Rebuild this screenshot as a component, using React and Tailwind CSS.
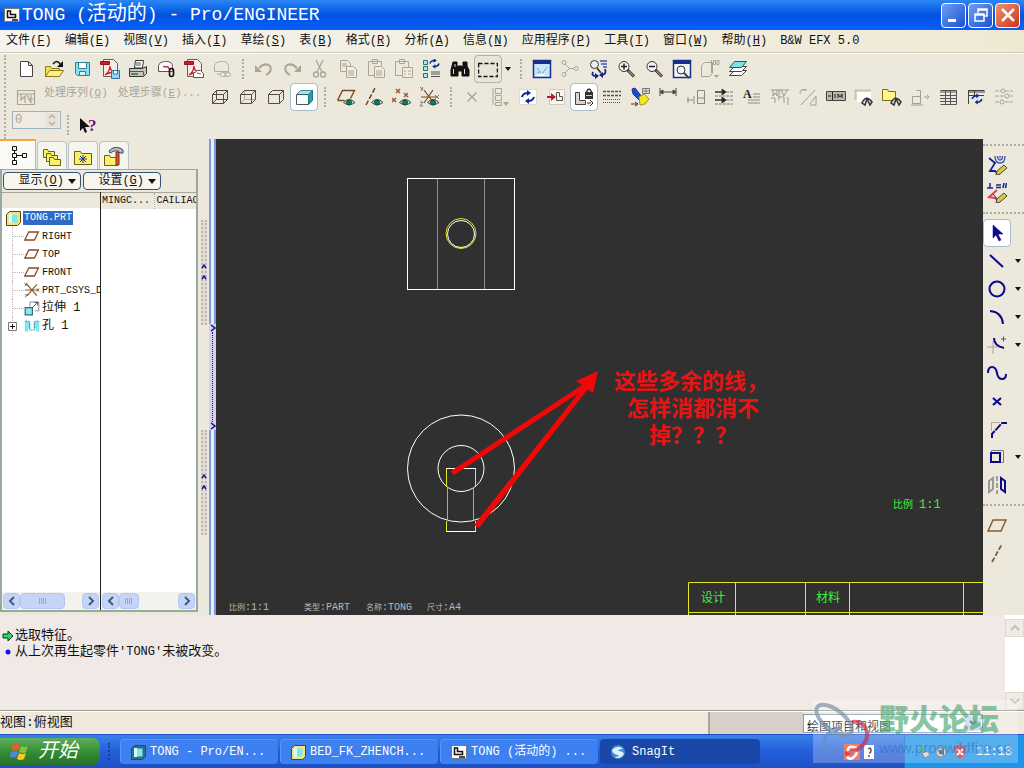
import React, { useState } from 'react';

const Icon = ({ children, size = 20 }) => (
  <svg width={size} height={size} viewBox="0 0 20 20" className="shrink-0" fill="none" stroke="#55524a" strokeWidth="1" aria-hidden="true">
    {children}
  </svg>
);

const glass = (
  <>
    <circle cx="8" cy="7.5" r="5" fill="#f4f4f4" stroke="#333" />
    <path d="M11.5 11 L18 17.5" stroke="#333" strokeWidth="3" />
    <path d="M12.5 12 L17.5 17" stroke="#b98a5c" strokeWidth="1.2" />
  </>
);
const pdf = (
  <>
    <path d="M3.5 .5h10l4 4v13h-14z" fill="#f3eeea" stroke="#6b5a58" />
    <path d="M.5 2.5h9v3h-9z" fill="#d01820" stroke="#a01018" />
    <path d="M5 16c4-3 5-7 5-9c0 4 3 6 6 6c-4 0-8 1-11 3z" stroke="#d02028" strokeWidth="1.3" />
  </>
);
const eye = (
  <>
    <path d="M7.5 15.5q5.500-6 11.500 0q-6 4.500-11.500 0z" fill="#bfe8da" stroke="#444" />
    <circle cx="13" cy="15.500" r="2.500" fill="#177a5c" stroke="#0d4a3a" />
  </>
);
const refresh = (
  <g stroke="#0a2a9c" strokeWidth="2">
    <path d="M4 10q1-4 6-4" /><path d="M9 3l4 3-4 3z" fill="#0a2a9c" stroke="none" />
    <path d="M16 10q-1 4-6 4" /><path d="M11 11l-4 3 4 3z" fill="#0a2a9c" stroke="none" />
  </g>
);

const icons = {
  newFile: <path d="M4.500 2.500h8l4 4v11h-12z M12.500 2.500v4h4" fill="#fff" stroke="#444" />,
  open: (
    <>
      <path d="M1.500 17.500v-10h5l1 2h8v8z" fill="#f5e04a" stroke="#8a7a20" />
      <path d="M1.500 17.500l4-6h14l-4 6z" fill="#fff27a" stroke="#8a7a20" />
      <path d="M9 5q4-5 7 0" stroke="#111" strokeWidth="1.500" /><path d="M19 2v6h-6z" fill="#111" stroke="none" />
    </>
  ),
  save: (
    <>
      <path d="M3.500 3.500h14v13h-12l-2-2z" fill="#8fe0ee" stroke="#2a7f98" />
      <path d="M6.500 3.500h8v6h-8z" fill="#fff" stroke="#2a7f98" /><path d="M7.500 12.500h6v4h-6z" fill="#d8f6fa" stroke="#2a7f98" />
    </>
  ),
  pdfSave: <>{pdf}<path d="M11.500 11.500h8v8h-8z" fill="#8fd8ee" stroke="#3b6ea0" /><path d="M13.500 12v3h4v-3" fill="#fff" stroke="#3b6ea0" /></>,
  print: (
    <>
      <path d="M6.500 9l1-7.500h8l-1 7.500z" fill="#fff" stroke="#333" />
      <path d="M1.500 9.500h13l4-2v7l-3 3h-14z" fill="#c9c6b8" stroke="#333" />
      <path d="M8 4h5M8 6h5M1.500 12.500h14v4" stroke="#555" /><path d="M3 15h7" stroke="#1c7a34" strokeWidth="1.500" />
    </>
  ),
  mail: (
    <>
      <path d="M2.500 12.500v-6q1-4 6-4h2q6 0 6 5v5z" fill="#fbfbfb" stroke="#555" />
      <path d="M7 7.500l5 .500 2 3" stroke="#d03048" strokeWidth="1.500" />
      <rect x="13.500" y="9.500" width="4" height="8" rx="2" stroke="#111" strokeWidth="1.600" />
    </>
  ),
  pdfMail: <>{pdf}<path d="M9.500 18.500v-4l4-3h3l3 3v4z" fill="#fff" stroke="#555" /><path d="M13 14l4 1" stroke="#d03048" /></>,
  mailOff: (
    <g stroke="#b3ae9e">
      <path d="M2.500 12.500v-6q1-4 6-4h2q6 0 6 5v5z" /><path d="M5 15h4" />
      <rect x="8.500" y="13.500" width="6" height="4" rx="2" /><rect x="12.500" y="13.500" width="6" height="4" rx="2" />
    </g>
  ),
  undo: <g stroke="#aaa593" strokeWidth="2"><path d="M5 9q6-6 11-2q3 5-4 9" /><path d="M1 6v7h7z" fill="#aaa593" stroke="none" /></g>,
  redo: <g stroke="#aaa593" strokeWidth="2"><path d="M15 9q-6-6-11-2q-3 5 4 9" /><path d="M19 6v7h-7z" fill="#aaa593" stroke="none" /></g>,
  cut: <g stroke="#aaa593" strokeWidth="1.300"><path d="M6 1l6 12M13 1L7 13" /><circle cx="6" cy="15.500" r="2.500" /><circle cx="13" cy="15.500" r="2.500" /></g>,
  copy: <g stroke="#aaa593"><path d="M2.500 1.500h7l3 3v8h-10z" /><path d="M8.500 7.500h7l3 3v8h-10z" fill="#f0ece0" /><path d="M4 5h5M4 7h5M10 12h6M10 14h6M10 16h6" /></g>,
  paste: <g stroke="#aaa593"><path d="M2.500 2.500h13v14h-13z M6.500 .500h5v4h-5z" /><path d="M8.500 7.500h7l3 3v8h-10z" fill="#f0ece0" /><path d="M10 12h6M10 14h6M10 16h6" /></g>,
  pasteSpecial: <g stroke="#aaa593"><path d="M1.500 2.500h13v14h-13z M5.500 .500h5v4h-5z" /><path d="M8.500 8.500h10v10h-10z" fill="#f0ece0" /><path d="M10 12h2M14 12h3M10 15h2M14 15h3" /></g>,
  regen: (
    <>
      <path d="M1.500 1.500h4v4h-4zM1.500 7.500h4v4h-4zM1.500 14.500h4v4h-4z" fill="#a8ecec" stroke="#2d6d6d" />
      <path d="M9 13h9M9 15h9M9 17.500h9" stroke="#555" />
      <g transform="translate(5 -3) scale(.75)">{refresh}</g>
    </>
  ),
  find: (
    <g fill="#111" stroke="#111">
      <path d="M3 3h4v4l1 2v8H1v-6z M13 3h4v4l2 4v6h-7v-8l1-2z M8 7h4v5H8z" />
      <path d="M3.500 10v5M14.500 10v5M5 5v3" stroke="#ddd" />
    </g>
  ),
  selectBox: <path d="M.500 4.500h19v13h-19z" stroke="#111" strokeWidth="1.500" strokeDasharray="4 2" />,
  repaint: (
    <>
      <path d="M1.500 1.500h17v17h-17z" fill="#c9e6fa" stroke="#16308c" strokeWidth="1.500" /><path d="M1 1h18v4H1z" fill="#16308c" stroke="none" />
      <path d="M5 9l5 6 5-7M10 15l-5-2" stroke="#5a84c4" strokeDasharray="2 1" /><path d="M4 17l6-3 3 3z" fill="#fff" stroke="none" />
    </>
  ),
  nodes: <g stroke="#aaa593"><circle cx="4" cy="3.500" r="2" /><circle cx="4" cy="15.500" r="2" /><path d="M5 5l4 4M5 14l4-4M9 9.500h5" /><circle cx="16" cy="9.500" r="2" /></g>,
  zoomRefresh: (
    <>
      <circle cx="6.500" cy="5.500" r="4" fill="#eee" stroke="#333" /><path d="M9 9l4 5" stroke="#444" strokeWidth="2" />
      <path d="M12 2h7M13 5h6M15 8h4" stroke="#4055b0" strokeWidth="1.500" />
      <path d="M5 13q-2 4 3 4M17 10q2 5-3 6" stroke="#16208c" strokeWidth="1.800" /><path d="M7 14l4 3-4 3zM15 13v6l-4-3z" fill="#16208c" stroke="none" />
    </>
  ),
  zoomIn: <>{glass}<path d="M5 7.500h6M8 4.500v6" stroke="#222" strokeWidth="1.500" /></>,
  zoomOut: <>{glass}<path d="M5 7.500h6" stroke="#222" strokeWidth="1.500" /></>,
  refit: (
    <>
      <path d="M1.500 1.500h17v17h-17z" fill="#f4f4f4" stroke="#16308c" strokeWidth="1.500" /><path d="M1 1h18v4H1z" fill="#16308c" stroke="none" />
      <circle cx="9" cy="11" r="4" stroke="#333" /><path d="M12 14l5 5" stroke="#444" strokeWidth="2" />
    </>
  ),
  orient: <g stroke="#aaa593"><path d="M1.500 6.500l3-3h8v11l-3 3h-8z" /><path d="M11.500 1v13M13.500 1.500h2v4h-2zM17 1.500h2v4h-2z" /><path d="M14 16h5l-2.500 3z" fill="#aaa593" stroke="none" /></g>,
  layers: (
    <>
      <path d="M1.500 16.500l5-5h12l-5 5z" fill="#fff" stroke="#444" /><path d="M1.500 12.500l5-5h12l-5 5z" fill="#fff" stroke="#444" />
      <path d="M1.500 8.500l5-6h12l-5 6z" fill="#7de3ea" stroke="#285d66" />
    </>
  ),
  process: <g stroke="#aaa593" strokeWidth="1.200"><path d="M1.500 3.500h17v14h-17zM1 7h18M5 7v6l4-4v7M11 8l4 8V8M12 12h5" /></g>,
  wire: <path d="M2.500 7.500h11v9h-11zM6.500 3.500h11v9h-11zM2.500 7.500l4-4M13.500 7.500l4-4M2.500 16.500l4-4M13.500 16.500l4-4" stroke="#554a40" />,
  hidden: <><path d="M6.500 3.500v9h11M2.500 16.500l4-4" stroke="#b0a8a0" /><path d="M2.500 7.500h11v9h-11zM2.500 7.500l4-4h11v9l-4 4M13.500 7.500l4-4" stroke="#554a40" /></>,
  noHidden: <path d="M2.500 7.500h11v9h-11zM2.500 7.500l4-4h11v9l-4 4M13.500 7.500l4-4" stroke="#554a40" />,
  shaded: (
    <>
      <path d="M2.500 7.500l4-4h12l-4 4z" fill="#8ceaf0" stroke="#3f8f98" /><path d="M2.500 7.500h12v10h-12z" fill="#f2fdfd" stroke="#555" />
      <path d="M14.500 7.500l4-4v10l-4 4z" fill="#1fa0ae" stroke="#28717a" />
    </>
  ),
  planeEye: <><path d="M1.500 13.500l5-10h12l-4 8M1.500 13.500h7" stroke="#7a4a20" strokeWidth="1.400" />{eye}</>,
  axisEye: <><path d="M2 18l9-17" stroke="#7a4a20" strokeWidth="1.600" strokeDasharray="5 2" />{eye}</>,
  pointEye: <><path d="M4 2l4 4M8 2l-4 4M0 11l4 4M4 11l-4 4M12 6l4 4M16 6l-4 4" stroke="#a0522d" strokeWidth="1.400" />{eye}</>,
  csysEye: <><path d="M4 3l9 12M13 3L4 16M1 10h15" stroke="#7a4a20" strokeWidth="1.200" /><path d="M0 0l3 3M3 0L1 4M15 8l4 4M19 8l-4 4M0 15h3l-3 4h3" stroke="#777" />{eye}</>,
  close: <path d="M5.500 5.500l9 9M14.500 5.500l-9 9" stroke="#a29d8d" strokeWidth="1.200" />,
  listOff: <g stroke="#aaa593"><path d="M5.500 1.500h6v5h-6zM5.500 8.500h6v5h-6zM5.500 15.500h6v3h-6zM3 1v17" /><path d="M13 15h6l-3 4z" fill="#aaa593" stroke="none" /></g>,
  update: <><path d="M1.500 2.500h17v15h-17z" fill="#fff" stroke="#e0dccd" />{refresh}</>,
  insertView: <><path d="M3.500 2.500h15v15h-15z" fill="#f8f5ee" stroke="#d0cbbb" /><path d="M10.500 5.500v8h6v-4h-3v-4z" stroke="#555" /><path d="M1 10h6" stroke="#c01828" strokeWidth="2" /><path d="M5 6l5 4-5 4z" fill="#c01828" stroke="none" /></>,
  lockView: (
    <>
      <path d="M1.500 5.500h4v8h6v4h-10z" fill="#d8d6cf" stroke="#444" /><rect x="11" y="5" width="8" height="7" fill="#333" stroke="none" />
      <path d="M12.500 5q2.500-6 5 0" stroke="#333" strokeWidth="1.500" /><path d="M12 8.500h6" stroke="#ccc" /><path d="M13 16h4M16 13l3 3-3 3" stroke="#222" />
    </>
  ),
  hatch: <g stroke="#555"><path d="M1 4.500h18M1 8.500h18" strokeDasharray="3 1" strokeWidth="1.500" /><path d="M1 12.500h18M1 15.500h18" strokeDasharray="1 1" /></g>,
  clean: (
    <>
      <path d="M2 2l3-1 7 9-3 3-6-6z" fill="#1c4fc0" stroke="#1437a0" /><path d="M9 10l5-3 5 5-4 5-5 1z" fill="#f5e52a" stroke="#a59510" />
      <path d="M12.500 1.500h7v5h-7zM12 4h7M16 1v5" stroke="#777" /><path d="M1 17h6M5 15l3 2-3 2" stroke="#333" />
    </>
  ),
  dimension: <path d="M2 1v8M18 1v8M2 5h16M2 5l3-2v4zM18 5l-3-2v4z" fill="#444" stroke="#444" />,
  ref: <g stroke="#8d897c"><path d="M1 13h6M8 9v8M2 10v6M11.500 3.500h7v13h-7zM12 11h6" /></g>,
  align: <g stroke="#333"><path d="M1 5h9M1 13h9" strokeWidth="1.500" /><path d="M8 2l4 3-4 3zM8 10l4 3-4 3z" fill="#222" /><path d="M12 5h8M12 9h8M12 13h8M1 9h10M1 17h18" stroke="#777" strokeDasharray="3 1" /></g>,
  note: <><text x="1" y="11" fontSize="12" fontWeight="bold" fill="#222" stroke="none" fontFamily="Liberation Serif">A</text><path d="M11 7h7M11 10h7M6 13h12M6 16h12" stroke="#888" /></>,
  gtol: <g stroke="#9d998a"><path d="M1 3h18M3 3v6l2-3 2 3V3M9 3v10M11 3l3 6 3-6M8 10h6v6M18 10v8M1 11h4v5" /></g>,
  surface: <g stroke="#a29e90"><path d="M3 18L17 3M8 3q-6-2-6 4M4 3h5M12 17l6-8M18 9v9h-6" /></g>,
  tolerance: <><path d="M.500 4.500h19v9h-19z" fill="#b9b7ae" stroke="#444" /><path d="M6.500 5v8M2 9h3M9 11V7M12 11V7l2 3 2-3v4" stroke="#222" /></>,
  symbol: <><path d="M1.500 13V3.500h15" stroke="#c8c4b6" strokeWidth="2" /><path d="M3 5h14v10H3z" fill="#fff" stroke="none" /><path d="M8 16q4-9 10-1l-2 3-3-6-2 6z" fill="#ddd" stroke="#333" strokeWidth="1.500" /></>,
  symbolFolder: <><path d="M.500 13.500v-11h5l1 2h7v9z" fill="#fff58a" stroke="#7a7010" /><path d="M9 16q4-9 10-1l-2 3-3-6-2 6z" fill="#ddd" stroke="#333" strokeWidth="1.500" /></>,
  move: <g stroke="#a29e90"><path d="M2.500 9.500h8v7h-8zM6.500 3.500h4v9M14 10h5M17 8l2 2-2 2M1 18h12" /></g>,
  table: <path d="M2.500 3.500h16v14h-16M2 5h16M2 8.500h16M2 11.500h16M2 14.500h16M7.500 4v14M12.500 4v14" stroke="#555" />,
  tableUpdate: <><path d="M2.500 3.500h16M2 5h17M2 8.500h16M2.500 3v14M8.500 4v6" stroke="#444" /><g transform="translate(3 4) scale(.8)">{refresh}</g></>,
  tune: <g stroke="#a8a494"><path d="M1 4h18M1 9h18M1 15h18" strokeDasharray="4 1" /><circle cx="9" cy="4" r="2" fill="#eee" /><circle cx="13" cy="9" r="2" fill="#eee" /><circle cx="8" cy="15" r="2" fill="#eee" /></g>,
  sketchRef: (
    <>
      <path d="M2 3l6 5-5 8h5l4 4" stroke="#16209a" strokeWidth="1.800" />
      <path d="M8 1q0 7 5 7t5-7M10.500 1q0 4 2.500 4t2.500-4" stroke="#3a4cae" strokeWidth="1.300" /><circle cx="13" cy="2" r="1" fill="#3a4cae" stroke="none" />
      <path d="M10 16l7-6 3 3-7 6-4 1z" fill="#d8cf40" stroke="#444" />
    </>
  ),
  constraint: (
    <>
      <path d="M0 5h6M3 0v5M9 2h5M9 4.500h5M17 0l-1 5M19.500 0l-1 5" stroke="#16209a" strokeWidth="1.500" />
      <path d="M1 15l9-8M1 14l7 1 4 4" stroke="#e04848" strokeWidth="2" /><path d="M6 11l6 7" stroke="#16209a" /><path d="M10 16l7-6 3 3-7 6-4 1z" fill="#d8cf40" stroke="#444" />
    </>
  ),
  pointer: <path d="M6 2v13l3-3 3 6 2-1-3-6h5z" fill="#0a0a8c" stroke="#0a0a8c" strokeWidth=".500" />,
  line: <path d="M3 4l13 12" stroke="#0a0a8c" strokeWidth="2" />,
  circle: <circle cx="10" cy="10" r="7.500" stroke="#0a0a8c" strokeWidth="2" />,
  arc: <path d="M3 4q12 1 13 13" stroke="#0a0a8c" strokeWidth="2" />,
  fillet: <><path d="M0 12h16M6 6v13" stroke="#aaa593" /><path d="M7 3q0 8 10 10" stroke="#0a0a8c" strokeWidth="2" /><path d="M14 4h5M16.500 1.500v5" stroke="#555" /></>,
  spline: <path d="M1 10q0-6 4-6t5 6t5 6t4-5" stroke="#0a0a8c" strokeWidth="2" />,
  point: <path d="M6 7l8 7M14 7l-8 7" stroke="#0a0a8c" strokeWidth="2.200" />,
  chamfer: <><path d="M4.500 12V3.500h8" stroke="#b4a88a" /><path d="M5 19v-4L15 4h5" stroke="#0a0a8c" strokeWidth="2" strokeDasharray="8 1" /></>,
  offset: <><path d="M4.500 6.500v-3h12v12h-2" stroke="#777" /><path d="M4 6h9v9H4z" stroke="#0a0a8c" strokeWidth="2" /></>,
  mirror: <><path d="M2 6l4-3v11l-4 3z" stroke="#999" strokeWidth="2" /><path d="M10 1v18" stroke="#555" strokeDasharray="5 2" /><path d="M14 3l4 3v11l-4-3z" stroke="#0a0a8c" strokeWidth="2" /></>,
  plane: <path d="M1 16l5-11h13l-5 11z" stroke="#8a5a28" strokeWidth="1.500" />,
  axis: <path d="M5 19L15 1" stroke="#8a5a28" strokeWidth="1.800" strokeDasharray="5 2" />,
};

const fileTools = ['newFile', 'open', 'save', 'pdfSave', 'print', 'mail', 'pdfMail', 'mailOff'];
const editTools = ['undo', 'redo', 'cut', 'copy', 'paste', 'pasteSpecial', 'regen', 'find'];
const viewTools = ['repaint', 'nodes', 'zoomRefresh', 'zoomIn', 'zoomOut', 'refit', 'orient', 'layers'];
const displayTools = ['wire', 'hidden', 'noHidden', 'shaded'];
const datumTools = ['planeEye', 'axisEye', 'pointEye', 'csysEye'];
const drawingTools = [
  'close', 'listOff', 'update', 'insertView', 'lockView', 'hatch', 'clean', 'dimension', 'ref', 'align',
  'note', 'gtol', 'surface', 'tolerance', 'symbol', 'symbolFolder', 'move', 'table', 'tableUpdate', 'tune',
];
const sketchTools = ['pointer', 'line', 'circle', 'arc', 'fillet', 'spline', 'point', 'chamfer', 'offset', 'mirror'];
const withMenu = ['line', 'circle', 'arc', 'fillet', 'offset'];

const ToolButton = ({ name, active, framed }) => (
  <button
    type="button"
    aria-label={name}
    className={
      active
        ? 'flex size-7 shrink-0 items-center justify-center rounded-sm border border-[#a9bccb] bg-white'
        : framed
          ? 'flex size-7 shrink-0 items-center justify-center rounded-sm border border-[#b5b1a5] bg-[#e8e4d8]'
          : 'flex size-7 shrink-0 items-center justify-center'
    }
  >
    <Icon>{icons[name]}</Icon>
  </button>
);

const Tools = ({ names, active }) => names.map(n => <ToolButton key={n} name={n} active={n === active} />);

const Grip = () => <div className="mx-1 w-1 shrink-0 self-stretch border-l-2 border-dotted border-[#b3af9f]" />;

const VSep = () => <div className="flex w-3.5 shrink-0 justify-center self-stretch py-1"><div className="border-l-2 border-dotted border-[#b3af9f]" /></div>;

const Caret = () => (
  <svg width="6" height="4" viewBox="0 0 6 4" aria-hidden="true"><path d="M0 0h6L3 4z" fill="#111" /></svg>
);

const menus = [
  ['文件', 'F'], ['编辑', 'E'], ['视图', 'V'], ['插入', 'I'], ['草绘', 'S'], ['表', 'B'], ['格式', 'R'],
  ['分析', 'A'], ['信息', 'N'], ['应用程序', 'P'], ['工具', 'T'], ['窗口', 'W'], ['帮助', 'H'],
];

const DrawingIcon = () => (
  <svg width="16" height="14" viewBox="0 0 16 14" className="shrink-0" aria-hidden="true">
    <path d="M.500 .500h15v13H.500z" fill="#fff" stroke="#777" />
    <path d="M3.500 3v6.500h8v-3h-5V3zM8 12h6" fill="none" stroke="#111" strokeWidth="1.500" />
  </svg>
);

const PartIcon = ({ yellow }) => (
  <svg width="15" height="15" viewBox="0 0 15 15" className="shrink-0" aria-hidden="true">
    <path d="M.500 3.500l3-3h11v11l-3 3H.500z" fill={yellow ? '#f4e37a' : '#2c6f86'} stroke="#4a4620" />
    <path d="M3.500 3.500h8v8h-8z" fill="#7ce6ee" /><path d="M3 3h3v9H3z" fill="#d9fbfb" />
  </svg>
);

const TitleBar = () => (
  <header className="flex h-[30px] items-center bg-gradient-to-b from-[#2a86f5] via-[#0351e0] to-[#0560fa] pl-1 pr-1">
    <DrawingIcon />
    <h1 className="ml-0.5 flex-1 truncate text-lg leading-7 text-white">
      TONG (<span className="text-xl">活动的</span>) - Pro/ENGINEER
    </h1>
    <div className="flex gap-0.5">
      <button type="button" aria-label="最小化" className="flex size-[25px] items-center justify-center rounded border border-white bg-gradient-to-br from-[#6f9df5] to-[#1c50d0]">
        <svg width="18" height="18" viewBox="0 0 18 18"><path d="M3 13h8v3H3z" fill="#fff" /></svg>
      </button>
      <button type="button" aria-label="还原" className="flex size-[25px] items-center justify-center rounded border border-white bg-gradient-to-br from-[#6f9df5] to-[#1c50d0]">
        <svg width="18" height="18" viewBox="0 0 18 18" fill="none" stroke="#fff" strokeWidth="1.500"><path d="M6 7V3h9v7h-3M6 4h9M3 8h9v7H3zM3 9h9" /></svg>
      </button>
      <button type="button" aria-label="关闭" className="flex size-[25px] items-center justify-center rounded border border-white bg-gradient-to-br from-[#f0906c] to-[#c83010]">
        <svg width="18" height="18" viewBox="0 0 18 18" stroke="#fff" strokeWidth="2.500"><path d="M3 3l12 12M15 3L3 15" /></svg>
      </button>
    </div>
  </header>
);

const MenuBar = () => (
  <nav className="flex h-[23px] items-center gap-[13px] overflow-hidden border-b border-[#d0ccbe] bg-gradient-to-r from-[#f4f3ee] to-[#efe9d4] pl-[6px] text-xs">
    {menus.map(([label, key]) => (
      <button type="button" key={key} className="shrink-0 whitespace-nowrap">{label}(<u>{key}</u>)</button>
    ))}
    <button type="button" className="shrink-0 whitespace-nowrap">B&amp;W EFX 5.0</button>
  </nav>
);

const Toolbars = () => {
  const [count, setCount] = useState('0');
  return (
    <div className="flex h-[86px] overflow-hidden border-t border-[#fbfaf5] pt-px">
      <Grip />
      <div className="flex min-w-0 flex-1 flex-col">
        <div className="flex h-7 items-center">
          <Tools names={fileTools} />
          <VSep />
          <Tools names={editTools} />
          <ToolButton name="selectBox" framed />
          <button type="button" aria-label="选取菜单" className="flex h-7 w-3 shrink-0 items-center justify-center"><Caret /></button>
          <VSep />
          <Tools names={viewTools} />
        </div>
        <div className="flex h-7 items-center">
          <ToolButton name="process" />
          <div className="flex w-[166px] shrink-0 gap-2.5 self-start whitespace-nowrap pl-1 pt-0.5 text-[11px] leading-4 text-[#aaa593]">
            <button type="button" disabled>处理序列(<u>Q</u>)</button>
            <button type="button" disabled>处理步骤(<u>E</u>)...</button>
          </div>
          <Tools names={displayTools} active="shaded" />
          <VSep />
          <Tools names={datumTools} />
          <VSep />
          <Tools names={drawingTools} active="lockView" />
        </div>
        <div className="flex h-7 items-start">
          <div className="flex h-[18px] w-[49px] items-center border border-[#9fb3c4] bg-[#efeae2]">
            <input aria-label="帧" value={count} onChange={e => setCount(e.target.value)} className="w-8 bg-transparent pl-0.5 text-xs leading-4 text-[#aaa593] outline-none" />
            <svg width="14" height="14" viewBox="0 0 14 14" aria-hidden="true">
              <path d="M0 0h14v14H0z" fill="#e6e2d6" /><path d="M4 5l3-3 3 3M4 9l3 3 3-3" fill="none" stroke="#b5b1a3" strokeWidth="1.500" />
            </svg>
          </div>
          <VSep />
          <button type="button" aria-label="上下文帮助" className="flex h-6 w-7 items-end justify-center">
            <svg width="20" height="18" viewBox="0 0 20 18">
              <path d="M1 1v13l3-3 2 5 2-1-2-5h5z" fill="#111" />
              <text x="9" y="14" fontSize="17" fontWeight="bold" fill="#7a1080" fontFamily="Liberation Serif">?</text>
            </svg>
          </button>
        </div>
      </div>
    </div>
  );
};

const folder = (x, y) => <path d={`M${x} ${y}v-8h4l1 2h6v6z`} fill="#fbf06a" stroke="#6b6310" />;

const tabs = [
  { id: '模型树', art: <path d="M4.500 1.500h4v4h-4zM4.500 8.500h4v4h-4zM4.500 15.500h4v4h-4zM14.500 8.500h4v4h-4zM6.500 6v2M6.500 13v2M9 10.500h5" stroke="#111" /> },
  { id: '文件夹', art: <>{folder(1.5, 11.5)}{folder(4.5, 15.5)}{folder(7.5, 19.5)}</> },
  { id: '收藏夹', art: <><path d="M1.500 18.500v-13h6l1 2h10v11z" fill="#fbf06a" stroke="#6b6310" /><path d="M10 9v8M6 13h8M7 10l6 6M13 10l-6 6" stroke="#1c35a8" /></> },
  { id: '连接', art: <><path d="M.500 19.500v-10h5l1 2h7v8z" fill="#fbf06a" stroke="#6b6310" /><path d="M12 6h3v13h-3z" fill="#d05828" stroke="#803010" /><path d="M5 5q4-5 11-3l3 2v3h-3l-2-2q-4-1-8 2z" fill="#aebcc8" stroke="#445" /></> },
];

const planeArt = <path d="M1 15l5-10h12l-5 10z" stroke="#8a4a20" strokeWidth="1.600" />;
const treeRows = [
  ['RIGHT', planeArt],
  ['TOP', planeArt],
  ['FRONT', planeArt],
  ['PRT_CSYS_DEF', <><path d="M3 2l13 15M16 3L4 17M1 10h17" stroke="#8a5a20" strokeWidth="1.500" /><path d="M0 1l4 4M4 1L1 5M16 8l3 4M19 8l-3 4M1 16h4l-4 3" stroke="#555" /></>],
  ['拉伸 1', <><path d="M7.500 8.500v-6h11v11h-5" stroke="#777" /><path d="M1.500 9.500h9v9h-9z" fill="#8ce8f0" stroke="#28707c" strokeWidth="1.500" /><path d="M10 10l7-7M13 3h4v4" stroke="#335" /></>],
  ['孔 1', <><path d="M1 4h4v13H1zM15 4h4v13h-4zM5 4h3v9H5zM12 4h3v9h-3z" fill="#7fe6ee" stroke="none" /><path d="M1 4h5l1 2v9h6V6l1-2h5" stroke="#2a8490" strokeDasharray="3 1" /></>],
];

const ScrollButton = ({ dir }) => (
  <button type="button" aria-label={dir === 'left' ? '向左' : '向右'} className="flex h-4 w-[17px] shrink-0 items-center justify-center rounded-sm border border-[#b5c6f2] bg-[#c6d4fa]">
    <svg width="8" height="10" viewBox="0 0 8 10" fill="none" stroke="#45587c" strokeWidth="2"><path d={dir === 'left' ? 'M6 1L2 5l4 4' : 'M2 1l4 4-4 4'} /></svg>
  </button>
);

const Thumb = () => (
  <svg width="8" height="6" viewBox="0 0 8 6" stroke="#90a6dc"><path d="M.500 0v6M2.500 0v6M4.500 0v6M6.500 0v6" /></svg>
);

const ModelTree = () => (
  <aside className="flex w-[198px] shrink-0 flex-col pb-[3px]">
    <div className="flex h-[30px] shrink-0 items-end">
      {tabs.map((t, i) => (
        <button
          type="button"
          key={t.id}
          aria-label={t.id}
          className={
            i === 0
              ? 'flex h-[30px] w-9 items-center justify-center border-r border-t-2 border-r-[#b9b6a8] border-t-[#f0a838] bg-[#fbfaf7]'
              : 'ml-px flex h-[28px] w-[30px] items-center justify-center rounded-t-sm border border-b-0 border-[#b9c4c8] bg-[#f6f4ee]'
          }
        >
          <Icon>{t.art}</Icon>
        </button>
      ))}
    </div>
    <div className="flex min-h-0 flex-1 flex-col border-2 border-t border-[#9aa8a4] bg-[#ece9dc]">
      <div className="flex gap-0.5 p-px pt-0.5">
        {[['显示', 'O'], ['设置', 'G']].map(([label, key]) => (
          <button type="button" key={key} className="flex h-[18px] w-[78px] items-center justify-end gap-1 rounded-sm border border-[#2f5573] bg-[#f7f5ee] pr-1 text-xs leading-4">
            <span className="whitespace-nowrap">{label}(<u>{key}</u>)</span>
            <svg width="8" height="5" viewBox="0 0 8 5"><path d="M0 0h8L4 5z" fill="#111" /></svg>
          </button>
        ))}
      </div>
      <div className="mt-px flex min-h-0 flex-1 bg-white">
        <div className="flex w-[99px] shrink-0 flex-col border-r border-[#222]">
          <div className="h-4 shrink-0 border-t border-[#a8a698] bg-[#ece9dc]" />
          <div className="min-h-0 flex-1 overflow-hidden pl-1 pt-px text-[10px]">
            <div className="flex h-[18px] items-center gap-0.5">
              <PartIcon yellow />
              <span className="bg-[#316ac5] px-px leading-[14px] text-white">TONG.PRT</span>
            </div>
            <ul className="ml-1.5">
              {treeRows.map(([name, art], i) => (
                <li key={name} className="flex h-[18px] items-center whitespace-nowrap">
                  <span className="flex h-[18px] w-3 shrink-0 items-center border-l border-dotted border-[#bbb]">
                    {i === 5 ? (
                      <svg width="9" height="9" viewBox="0 0 9 9" className="relative -left-[5px]"><path d="M.500 .500h8v8h-8z" fill="#fff" stroke="#777" /><path d="M2 4.500h5M4.500 2v5" stroke="#111" /></svg>
                    ) : (
                      <span className="w-full border-t border-dotted border-[#bbb]" />
                    )}
                  </span>
                  <Icon size={16}>{art}</Icon>
                  <span className={i > 3 ? 'ml-0.5 text-xs leading-4' : 'ml-0.5'}>{name}</span>
                </li>
              ))}
            </ul>
          </div>
          <div className="flex h-[18px] shrink-0 items-center bg-[#f3f3ee] px-px">
            <ScrollButton dir="left" />
            <div className="flex h-4 w-[45px] items-center justify-center rounded-sm border border-[#b5c6f2] bg-[#c6d4fa]"><Thumb /></div>
            <div className="flex-1" />
            <ScrollButton dir="right" />
          </div>
        </div>
        <div className="flex min-w-0 flex-1 flex-col">
          <div className="min-h-0 flex-1 overflow-hidden">
            <table className="w-full table-fixed border-collapse">
              <thead>
                <tr className="h-4 border-t border-[#a8a698] bg-[#ece9dc] text-left text-[10px] leading-[14px]">
                  <th className="w-[53px] whitespace-nowrap border-r border-dotted border-[#aaa] p-0 pl-px font-normal">MINGC...</th>
                  <th className="overflow-hidden whitespace-nowrap p-0 pl-0.5 font-normal">CAILIAO</th>
                </tr>
              </thead>
            </table>
          </div>
          <div className="flex h-[18px] shrink-0 items-center bg-[#f3f3ee] px-px">
            <ScrollButton dir="left" />
            <div className="flex h-4 w-5 items-center justify-center rounded-sm border border-[#b5c6f2] bg-[#c6d4fa]"><Thumb /></div>
            <div className="flex-1" />
            <ScrollButton dir="right" />
          </div>
        </div>
      </div>
    </div>
  </aside>
);

const Chevrons = () => (
  <svg width="6" height="18" viewBox="0 0 6 18" fill="none" stroke="#14149a" strokeWidth="1.500"><path d="M1 5l2-3 2 3M1 16l2-3 2 3" /></svg>
);

const Splitter = () => (
  <div className="flex w-[18px] shrink-0">
    <div className="flex w-[11px] flex-col items-center justify-center gap-[105px]">
      {[0, 1].map(k => (
        <button type="button" key={k} aria-label="收起面板" className="flex h-[105px] w-1.5 items-center border-x-2 border-dotted border-[#bdb5b0] bg-[#e2dcd4]">
          <span className="-mx-0.5 shrink-0"><Chevrons /></span>
        </button>
      ))}
    </div>
    <div className="flex w-[7px] flex-col border-x-2 border-[#7e9bd6] bg-[#e4edfa]">
      <div className="flex-1" />
      <button type="button" aria-label="展开面板" className="-mx-0.5 flex h-[106px] flex-col items-center justify-between bg-[#d5d0ee]">
        <svg width="6" height="8" viewBox="0 0 6 8" fill="none" stroke="#14149a" strokeWidth="1.500"><path d="M1 1l4 3-4 3" /></svg>
        <span className="flex-1 border-l border-dotted border-[#14149a]" />
        <svg width="6" height="8" viewBox="0 0 6 8" fill="none" stroke="#14149a" strokeWidth="1.500"><path d="M1 1l4 3-4 3" /></svg>
      </button>
      <div className="flex-1" />
    </div>
  </div>
);

const footer = [
  [13, '比例', ':1:1'],
  [88, '类型', ':PART'],
  [150, '名称', ':TONG'],
  [211, '尺寸', ':A4'],
];

const Canvas = () => (
  <main className="min-w-0 flex-1 bg-[#303030]">
    <svg viewBox="0 0 767 476" className="block size-full" fill="none" stroke="#fff">
      {/* top view */}
      <rect x="191.5" y="39.5" width="107" height="111" />
      <path d="M221.5 40v110M268.5 40v110" stroke="#8f8f8f" />
      <circle cx="245" cy="94.500" r="15" stroke="#e6e620" />
      <circle cx="245" cy="95" r="13.500" />
      {/* front view */}
      <circle cx="245" cy="329.500" r="53.500" />
      <circle cx="245" cy="329.500" r="23" />
      <path d="M230 329.500h30M230 392.500h30" />
      <path d="M230.500 330v18M259.500 330v18M230.500 382v10M259.500 382v10" stroke="#e6e620" />
      <path d="M231.500 348v34M257.500 348v34" stroke="#a8a8a8" />
      {/* annotation */}
      <g fill="#f00808" stroke="none">
        <path d="M235 332l3 4L372 248l-3-4z" />
        <path d="M258 386l5 3L372 250l-4-3z" />
        <path d="M382 232l-22 10 17 12z" />
      </g>
      <g fill="#e81414" stroke="none" fontSize="22" fontWeight="bold" textAnchor="middle" fontFamily="'Noto Sans CJK SC', sans-serif">
        <text x="475" y="250">这些多余的线，</text>
        <text x="477" y="277">怎样消都消不</text>
        <text x="477" y="304">掉？？？</text>
      </g>
      {/* title block */}
      <path d="M472.500 476V443.500H767M472.500 473.500H767M519.500 444v32M589.500 444v32M633.500 444v32M747.500 444v32" stroke="#e6e620" />
      <g fill="#3cf03c" stroke="none" fontSize="12">
        <text x="485" y="463">设计</text>
        <text x="600" y="463">材料</text>
        <text x="677" y="369" fontSize="10">比例</text>
        <text x="703" y="369">1:1</text>
      </g>
      <g fill="#b8b8b8" stroke="none" fontSize="10">
        {footer.map(([x, label, value]) => (
          <text key={label} x={x} y="471"><tspan fontSize="8">{label}</tspan>{value}</text>
        ))}
      </g>
    </svg>
  </main>
);

const HSep = () => <div className="flex h-3 items-center self-stretch"><div className="w-full border-t-2 border-dotted border-[#b3af9f]" /></div>;

const SketchBar = () => (
  <aside className="flex w-[41px] shrink-0 flex-col">
    <HSep />
    <Tools names={['sketchRef', 'constraint']} />
    <HSep />
    {sketchTools.map(n => (
      <div key={n} className="flex items-center">
        <ToolButton name={n} active={n === 'pointer'} />
        {withMenu.includes(n) && <button type="button" aria-label={`${n} 菜单`} className="flex h-7 flex-1 items-center justify-center"><Caret /></button>}
      </div>
    ))}
    <HSep />
    <Tools names={['plane', 'axis']} />
  </aside>
);

const Messages = () => (
  <section className="flex h-24 shrink-0 border-b border-[#9b9a8c] bg-[#f0e9e6]">
    <div className="flex-1 pl-0.5 pt-[13px] text-[13px] leading-4">
      <p className="flex items-center gap-px">
        <svg width="12" height="12" viewBox="0 0 12 12"><path d="M1 4h5V1l5 5-5 5V8H1z" fill="#28d868" stroke="#0a3a1a" /></svg>
        选取特征。
      </p>
      <p className="flex items-center gap-px">
        <svg width="12" height="12" viewBox="0 0 12 12"><circle cx="6" cy="6" r="2.500" fill="#1414f0" /></svg>
        <span>从上次再生起零件<span className="text-xs">'TONG'</span>未被改变。</span>
      </p>
    </div>
    <div className="flex w-[19px] flex-col bg-white pt-1">
      <button type="button" aria-label="向上" className="flex h-[18px] items-center justify-center border border-[#dddad0] bg-[#efece5]">
        <svg width="10" height="6" viewBox="0 0 10 6" fill="none" stroke="#c3c0b4" strokeWidth="2"><path d="M1 5l4-4 4 4" /></svg>
      </button>
      <div className="flex-1" />
      <button type="button" aria-label="向下" className="flex h-[18px] items-center justify-center border border-[#dddad0] bg-[#efece5]">
        <svg width="10" height="6" viewBox="0 0 10 6" fill="none" stroke="#c3c0b4" strokeWidth="2"><path d="M1 1l4 4 4-4" /></svg>
      </button>
    </div>
  </section>
);

const StatusBar = () => (
  <div className="flex h-[23px] shrink-0 items-center border-t border-white bg-[#efe8dc]">
    <span className="flex-1 text-[13px] leading-5">视图:俯视图</span>
    <div className="h-full w-[95px] border-l-2 border-[#a8a699] bg-[#d6d0c9]" />
    <div className="relative mr-[41px] h-[19px] w-[180px] border border-[#7f9db9] bg-white">
      <select aria-label="选取过滤器" className="size-full appearance-none pl-[3px] text-xs leading-4 outline-none">
        <option>绘图项目和视图</option>
      </select>
      <span className="pointer-events-none absolute right-px top-px flex h-[15px] w-4 items-center justify-center rounded-sm bg-[#c6d4fa]">
        <svg width="8" height="6" viewBox="0 0 8 6" fill="none" stroke="#45587c" strokeWidth="2"><path d="M1 1l3 3 3-3" /></svg>
      </span>
    </div>
  </div>
);

const tasks = [
  ['TONG - Pro/EN...', <PartIcon />],
  ['BED_FK_ZHENCH...', <PartIcon yellow />],
  ['TONG (活动的) ...', <DrawingIcon />],
  ['SnagIt', <svg width="16" height="16" viewBox="0 0 16 16"><circle cx="8" cy="8" r="7" fill="#3f8fd0" /><path d="M2 6q6-6 11-1q-4 0-5 2q5 0 6 3q-4 6-10 3q4 0 5-2q-6 0-7-5z" fill="#dff0fa" /></svg>],
];

const TaskBar = () => (
  <footer className="flex h-[34px] shrink-0 items-stretch border-t border-[#1f4fc0] bg-gradient-to-b from-[#3a80ea] via-[#245edb] to-[#1d50c4] text-xs text-white">
    <button type="button" className="my-[3px] flex w-[100px] shrink-0 items-center gap-2 rounded-r-lg bg-gradient-to-b from-[#5fae5c] via-[#358f36] to-[#277028] pl-2.5 text-xl italic leading-6">
      <svg width="20" height="18" viewBox="0 0 20 18">
        <path d="M3 2q4-2 7 0L8 8q-3-2-7 0z" fill="#ee5a2c" /><path d="M11 3q4 2 7 0l-2 6q-3 2-7 0z" fill="#7cc83c" />
        <path d="M1 9q4-2 7 0l-2 6q-3-2-6 0z" fill="#4c86ea" /><path d="M9 10q3 2 7 0l-2 6q-4 2-7 0z" fill="#f6c928" />
      </svg>
      开始
    </button>
    <div className="mx-2 my-2 w-1 border-l-2 border-dotted border-[#16409f]" />
    <div className="flex min-w-0 flex-1 py-1">
      {tasks.map(([label, art], i) => (
        <button
          type="button"
          key={label}
          className={
            i === 3
              ? 'flex w-40 min-w-0 items-center gap-1.5 rounded-sm bg-[#1a48a8] pl-2.5'
              : 'mr-0.5 flex w-[158px] min-w-0 items-center gap-1 rounded-sm border-l border-t border-[#5a96f6] bg-[#3c80f2] pl-2.5'
          }
        >
          {art}
          <span className="truncate">{label}</span>
        </button>
      ))}
    </div>
    <div className="flex w-[58px] items-center justify-center gap-1">
      <svg width="16" height="16" viewBox="0 0 16 16">
        <path d="M0 0h16v16H0z" fill="#e8502c" /><path d="M13 4Q5 1 4 5t5 3t2 4t-8 1" fill="none" stroke="#fff" strokeWidth="2.500" />
      </svg>
      <svg width="10" height="14" viewBox="0 0 10 14"><path d="M0 0h10v14H0z" fill="#fff" /><path d="M4 4q3-2 3 1t-2 3M5 10v2" fill="none" stroke="#222" strokeWidth="1.500" /></svg>
    </div>
    <div className="ml-4 flex w-[120px] items-center gap-1 border-l border-[#0f6fc8] bg-[#1c94ea] pl-3">
      <svg width="14" height="14" viewBox="0 0 14 14" className="shrink-0"><path d="M1 2l6-1v6z" fill="#3cc03c" /><path d="M5 8l5-2 3 4-5 3z" fill="#d8d8c8" stroke="#667" /></svg>
      <svg width="14" height="14" viewBox="0 0 14 14" className="shrink-0"><circle cx="6" cy="7" r="5" fill="#c8ccd0" stroke="#666" /><path d="M4 5h2l3-2v8L6 9H4z" fill="#556" /></svg>
      <svg width="14" height="14" viewBox="0 0 14 14" className="shrink-0"><path d="M7 0l6 2q0 9-6 12Q1 11 1 2z" fill="#e02828" /><path d="M4 4l6 6M10 4l-6 6" stroke="#fff" strokeWidth="2" /></svg>
      <time className="flex-1 pr-3 text-right">11:13</time>
    </div>
  </footer>
);

const ForumMark = () => (
  <div className="pointer-events-none absolute bottom-[5px] right-1.5 flex h-[63px] w-[205px] items-center bg-white/25">
    <svg width="66" height="60" viewBox="0 0 66 60" fill="none" strokeWidth="4" className="shrink-0" opacity=".7">
      <ellipse cx="21" cy="18" rx="21" ry="10" transform="rotate(38 21 18)" stroke="#7f93a6" />
      <path d="M28 26Q12 30 11 40q0 10 12 9" stroke="#6a8cc8" />
      <path d="M32 52Q56 46 54 30q-3-12-15-10" stroke="#c8304e" />
    </svg>
    <div className="whitespace-nowrap">
      <p className="text-3xl font-black leading-8 text-[#54ad78]/70">野火论坛</p>
      <p className="font-['Liberation_Sans'] text-[15px] leading-5 text-[#2a68b8]/50">www.proewildfire.cn</p>
    </div>
  </div>
);

const App = () => (
  <div className="relative flex min-h-screen flex-col overflow-hidden bg-[#ece9dc] font-['Liberation_Mono','Noto_Sans_CJK_SC',monospace] text-[#111]">
    <TitleBar />
    <MenuBar />
    <Toolbars />
    <div className="flex min-h-[460px] flex-1">
      <ModelTree />
      <Splitter />
      <Canvas />
      <SketchBar />
    </div>
    <Messages />
    <StatusBar />
    <TaskBar />
    <ForumMark />
  </div>
);

export default App;
